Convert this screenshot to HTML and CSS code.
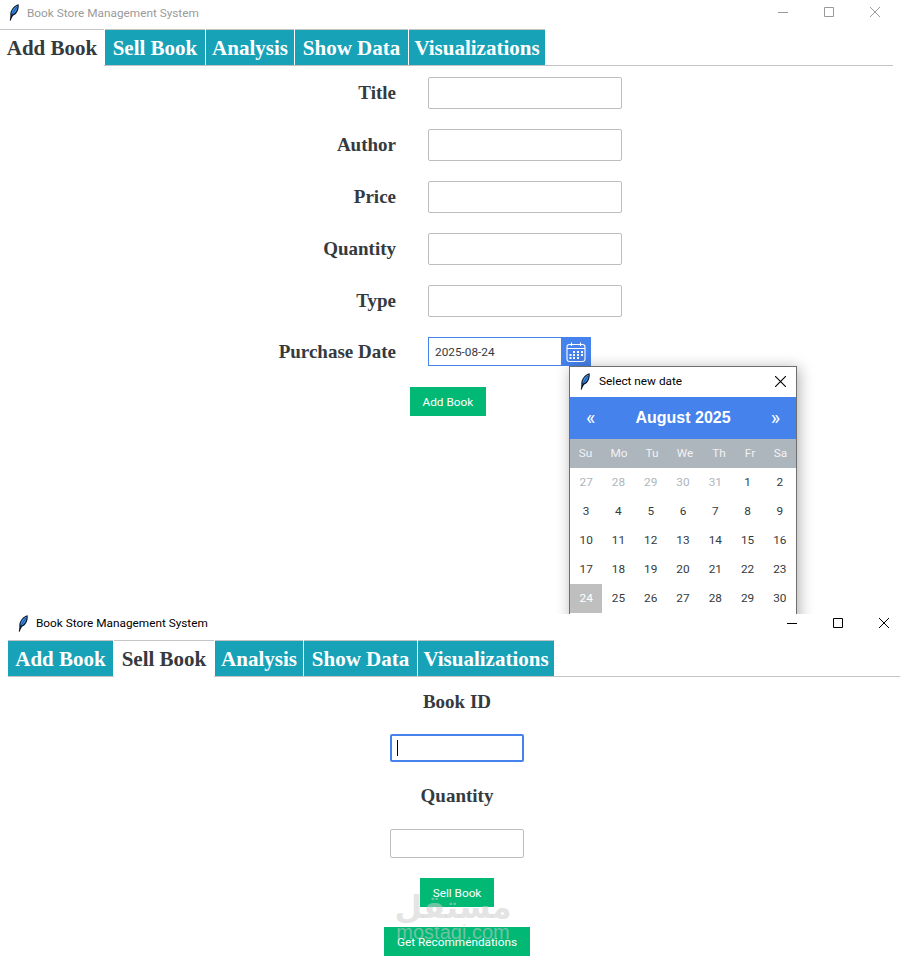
FILE: index.html
```html
<!DOCTYPE html>
<html lang="en">
<head>
    <meta charset="UTF-8">
    <title>Book Store Management System</title>
    <link rel="stylesheet" href="styles.css">
</head>
<body>
    <svg class="defs" width="0" height="0">
        <symbol id="feather" viewBox="0 0 10 17">
            <path d="M.8 16.8 C1.2 14.5 1.3 13 1.4 11.5 C.8 7 4.5 1.5 9.6 .3 C10.2 4.5 8.6 10 4 11.8 C3.2 13.2 2.3 14.8 1.6 16.8 Z" fill="#0a0f1e"/>
            <path d="M2.4 10.2 C2.4 6.6 5 3 8.6 1.6 C8.8 4.8 7.4 8.8 3.8 10.6 Z" fill="#3b8fe6"/>
            <path d="M2.2 12 L7.8 3" stroke="#123a78" stroke-width="0.7" fill="none"/>
        </symbol>
        <symbol id="win-min" viewBox="0 0 10 10"><path d="M0 5.5 H10" stroke="currentColor" fill="none"/></symbol>
        <symbol id="win-max" viewBox="0 0 10 10"><path d="M.5 .5 H9.5 V9.5 H.5 Z" stroke="currentColor" fill="none"/></symbol>
        <symbol id="win-close" viewBox="0 0 10 10"><path d="M0 0 L10 10 M10 0 L0 10" stroke="currentColor" stroke-width="1" fill="none"/></symbol>
    </svg>

    <!-- add book window -->
    <div class="window window-add">
        <div class="titlebar inactive">
            <svg class="feather"><use href="#feather"/></svg>
            <span class="title">Book Store Management System</span>
            <div class="controls">
                <svg><use href="#win-min"/></svg>
                <svg><use href="#win-max"/></svg>
                <svg><use href="#win-close"/></svg>
            </div>
        </div>
        <ul class="tabs">
            <li class="tab selected">Add Book</li>
            <li class="tab">Sell Book</li>
            <li class="tab">Analysis</li>
            <li class="tab">Show Data</li>
            <li class="tab">Visualizations</li>
        </ul>
        <div class="add-form">
            <label>Title</label><input type="text" class="field">
            <label>Author</label><input type="text" class="field">
            <label>Price</label><input type="text" class="field">
            <label>Quantity</label><input type="text" class="field">
            <label>Type</label><input type="text" class="field">
            <label>Purchase Date</label>
            <div class="date-entry">
                <input type="text" class="date-input" value="2025-08-24">
                <button class="date-btn">
                    <svg width="22" height="22" viewBox="0 0 22 22" fill="none" stroke="#fff" stroke-width="1.1">
                        <rect x="2" y="3.5" width="18" height="17" rx="2.5"/>
                        <path d="M2 7.5 H20 M6.5 1.5 V5 M15.5 1.5 V5"/>
                        <path d="M8 11h2M12 11h2M16 11h2M4.500 14h2M8 14h2M12 14h2M16 14h2M4.500 17h2M8 17h2M12 17h2" stroke-width="2"/>
                    </svg>
                </button>
            </div>
        </div>
        <div class="add-actions"><button class="btn">Add Book</button></div>

        <div class="datepicker">
            <div class="dp-title">
                <svg class="feather"><use href="#feather"/></svg>
                <span>Select new date</span>
                <svg class="dp-close"><use href="#win-close"/></svg>
            </div>
            <div class="dp-header"><span class="dp-nav">«</span><span class="dp-month">August 2025</span><span class="dp-nav">»</span></div>
            <div class="dp-grid dp-days">
                <span>Su</span><span>Mo</span><span>Tu</span><span>We</span><span>Th</span><span>Fr</span><span>Sa</span>
            </div>
            <div class="dp-grid dp-dates">
                <span class="muted">27</span><span class="muted">28</span><span class="muted">29</span><span class="muted">30</span><span class="muted">31</span><span>1</span><span>2</span>
                <span>3</span><span>4</span><span>5</span><span>6</span><span>7</span><span>8</span><span>9</span>
                <span>10</span><span>11</span><span>12</span><span>13</span><span>14</span><span>15</span><span>16</span>
                <span>17</span><span>18</span><span>19</span><span>20</span><span>21</span><span>22</span><span>23</span>
                <span class="today">24</span><span>25</span><span>26</span><span>27</span><span>28</span><span>29</span><span>30</span>
            </div>
        </div>
    </div>

    <!-- sell book window -->
    <div class="window window-sell">
        <div class="titlebar">
            <svg class="feather"><use href="#feather"/></svg>
            <span class="title">Book Store Management System</span>
            <div class="controls">
                <svg><use href="#win-min"/></svg>
                <svg><use href="#win-max"/></svg>
                <svg><use href="#win-close"/></svg>
            </div>
        </div>
        <ul class="tabs">
            <li class="tab">Add Book</li>
            <li class="tab selected">Sell Book</li>
            <li class="tab">Analysis</li>
            <li class="tab">Show Data</li>
            <li class="tab">Visualizations</li>
        </ul>
        <div class="sell-form">
            <label>Book ID</label>
            <div class="caret-wrap">
                <input type="text" class="field small focused">
                <span class="caret"></span>
            </div>
            <label>Quantity</label>
            <input type="text" class="field small">
            <button class="btn btn-sell">Sell Book</button>
            <button class="btn btn-rec">Get Recommendations</button>
        </div>
        <div class="watermark">
            <span class="wm-ar" lang="ar" dir="rtl">مستقل</span>
            <span class="wm-en">mostaqi.com</span>
        </div>
    </div>
</body>
</html>
```

FILE: styles.css
```css
* {
    box-sizing: border-box;
}
body {
    margin: 0;
    background-color: #fff;
    color: #343a40;
    font-family: Roboto, "Open Sans", Arial, sans-serif;
}
.defs {
    position: absolute;
}
.window {
    position: relative;
    width: 906px;
    overflow: hidden;
    background-color: #fff;
}
.window-add {
    height: 614px;
}
.window-sell {
    height: 344px;
}

/* title bars */
.titlebar {
    display: flex;
    align-items: center;
    color: #000;
    font-size: 11.8px;
}
.titlebar.inactive {
    color: #9a9a9a;
}
.window-add .titlebar {
    height: 29px;
    padding: 0 0 4px 9px;
}
.window-sell .titlebar {
    height: 26px;
    padding: 0 0 8px 18px;
}
.feather {
    width: 10px;
    height: 17px;
    flex: none;
}
.title {
    margin-left: 8px;
}
.controls {
    display: flex;
    margin-left: auto;
    margin-right: 17px;
    gap: 36px;
    color: #000;
}
.inactive .controls {
    margin-top: -2px;
    margin-right: 26px;
    color: #999;
}
.controls svg {
    width: 10px;
    height: 10px;
}

/* notebook tabs */
.tabs {
    display: flex;
    list-style: none;
    margin: 0;
    padding: 0;
    height: 37px;
    border-bottom: 1px solid #c4c4c4;
    font-family: "Liberation Serif", "Times New Roman", serif;
    font-weight: 700;
    font-size: 21px;
}
.window-add .tabs {
    margin-right: 13px;
}
.window-sell .tabs {
    margin: 0 6px 0 8px;
}
.tab {
    height: 37px;
    margin-right: 1px;
    line-height: 37px;
    text-align: center;
    color: #fff;
    background-color: #17a2b8;
    white-space: nowrap;
    border-top: 1px solid #c4c4c4;
    border-bottom: 1px solid #c4c4c4;
}
.tab:nth-child(1) {
    width: 104px;
}
.tab:nth-child(2) {
    width: 100px;
}
.tab:nth-child(3) {
    width: 88px;
}
.tab:nth-child(4) {
    width: 113px;
}
.tab:nth-child(5) {
    width: 136px;
}
.tab.selected {
    background-color: #fff;
    color: #343a40;
    border-bottom-color: #fff;
}
.window-sell .tab:nth-child(1) {
    width: 105px;
}

/* add book form */
.add-form {
    display: grid;
    grid-template-columns: 396px 194px;
    column-gap: 32px;
    row-gap: 20px;
    padding-top: 11px;
    align-items: center;
}
label {
    font-family: "Liberation Serif", "Times New Roman", serif;
    font-weight: 700;
    font-size: 19px;
    color: #343a40;
}
.add-form label {
    text-align: right;
}
.field {
    display: block;
    width: 194px;
    height: 32px;
    border: 1px solid #bdbdbd;
    border-radius: 2px;
    background-color: #fff;
    outline: none;
}
.date-entry {
    display: flex;
    height: 29px;
}
.date-input {
    width: 133px;
    height: 29px;
    padding: 0 6px;
    border: 1px solid #4582ec;
    border-right: none;
    font-family: inherit;
    font-size: 11.8px;
    color: #343a40;
    outline: none;
}
.date-btn {
    display: flex;
    align-items: center;
    justify-content: center;
    width: 30px;
    height: 29px;
    padding: 0;
    border: none;
    background-color: #4582ec;
}
.add-actions {
    padding: 21px 0 0 410px;
}
.btn {
    display: block;
    height: 29px;
    padding: 0 12.5px;
    border: none;
    background-color: #02b875;
    color: #fff;
    font-family: inherit;
    font-size: 11.8px;
    white-space: nowrap;
}

/* date picker popup */
.datepicker {
    position: absolute;
    left: 569px;
    top: 366px;
    width: 228px;
    height: 300px;
    border: 1px solid #6e6e6e;
    background-color: #fff;
    box-shadow: 2px 2px 14px rgba(0, 0, 0, .32);
}
.dp-title {
    display: flex;
    align-items: center;
    height: 30px;
    padding: 0 10px 2px;
    font-size: 11.8px;
    color: #000;
}
.dp-title span {
    margin-left: 9px;
}
.dp-close {
    width: 11px;
    height: 11px;
    margin-left: auto;
    color: #000;
}
.dp-header {
    display: flex;
    align-items: center;
    justify-content: space-between;
    height: 42px;
    padding: 0 16px;
    background-color: #4582ec;
    color: #fff;
}
.dp-month {
    font-family: "Liberation Sans", Arial, sans-serif;
    font-weight: 700;
    font-size: 16px;
}
.dp-nav {
    font-size: 20px;
}
.dp-grid {
    display: grid;
    grid-template-columns: repeat(7, 1fr);
    font-size: 11.8px;
    text-align: center;
}
.dp-grid.dp-days {
    grid-template-columns: 31px 36px 30px 36px 32px 30px 31px;
    height: 29px;
    line-height: 29px;
    background-color: #adb5bd;
    color: #f2f2f2;
}
.dp-dates span {
    height: 29px;
    line-height: 29px;
    color: #343a40;
}
.dp-dates .muted {
    color: #adb5bd;
}
.dp-dates .today {
    background-color: #bfbfbf;
    color: #fff;
}

/* sell book form */
.sell-form {
    display: flex;
    flex-direction: column;
    align-items: center;
    padding: 13px 0 0 8px;
}
.sell-form label {
    line-height: 24px;
}
.field.small {
    width: 134px;
    height: 29px;
}
.caret-wrap {
    position: relative;
    margin: 20px 0 22px;
}
.caret {
    position: absolute;
    left: 7px;
    top: 6px;
    width: 1px;
    height: 16px;
    background-color: #000;
}
.field.focused {
    border: 2px solid #4582ec;
    height: 28px;
}
.sell-form .caret-wrap + label {
    margin-bottom: 21px;
}
.btn-sell,
.btn-rec {
    margin-top: 20px;
}

/* site watermark */
.watermark {
    position: absolute;
    left: 393px;
    top: 276px;
    width: 120px;
    display: flex;
    flex-direction: column;
    align-items: center;
    color: rgba(205, 205, 205, .55);
    pointer-events: none;
}
.wm-ar {
    font-family: "DejaVu Sans", sans-serif;
    font-weight: 700;
    font-size: 32px;
    line-height: 34px;
}
.wm-en {
    font-family: "Liberation Sans", Arial, sans-serif;
    font-size: 20px;
    line-height: 16px;
}
```
